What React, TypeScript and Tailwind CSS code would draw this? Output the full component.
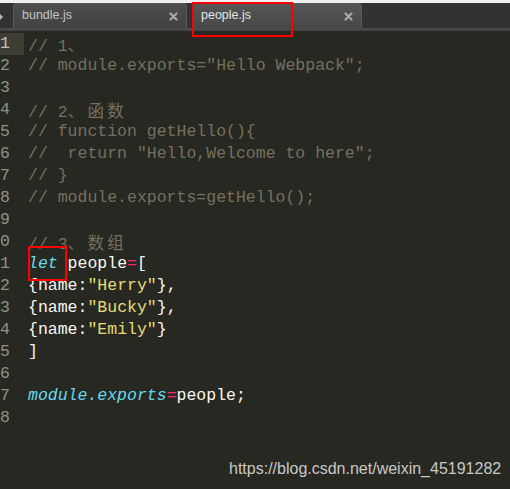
import React from "react";

type Tok = { t: string; c?: string; it?: boolean; cjk?: boolean };

const CMT = "text-[#75715e]";
const STR = "text-[#e6db74]";
const KW = "text-[#66d9ef]";
const OP = "text-[#f92672]";

// code lines, as tokens
const lines: Tok[][] = [
  [{ t: "// 1", c: CMT }, { t: "、", c: CMT, cjk: true }],
  [{ t: '// module.exports="Hello Webpack";', c: CMT }],
  [],
  [{ t: "// 2", c: CMT }, { t: "、函数", c: CMT, cjk: true }],
  [{ t: "// function getHello(){", c: CMT }],
  [{ t: '//  return "Hello,Welcome to here";', c: CMT }],
  [{ t: "// }", c: CMT }],
  [{ t: "// module.exports=getHello();", c: CMT }],
  [],
  [{ t: "// 3", c: CMT }, { t: "、数组", c: CMT, cjk: true }],
  [{ t: "let", c: KW, it: true }, { t: " people" }, { t: "=", c: OP }, { t: "[" }],
  [{ t: "{name:" }, { t: '"Herry"', c: STR }, { t: "}," }],
  [{ t: "{name:" }, { t: '"Bucky"', c: STR }, { t: "}," }],
  [{ t: "{name:" }, { t: '"Emily"', c: STR }, { t: "}" }],
  [{ t: "]" }],
  [],
  [{ t: "module.exports", c: KW, it: true }, { t: "=", c: OP }, { t: "people;" }],
  [],
];

const CloseX = () => (
  <svg width="9" height="9" viewBox="0 0 9 9">
    <path d="M1.5 1.5 L7.5 7.5 M7.5 1.5 L1.5 7.5" stroke="#a8a8a8" strokeWidth="2.2" strokeLinecap="round" />
  </svg>
);

const Tab = ({ name, active }: { name: string; active?: boolean }) => (
  <div
    className={`flex items-center justify-between h-full rounded-t-[4px] pl-[8px] pr-[8px] border-t border-x border-[#5a5a5a] ${
      active ? "w-[170px] bg-gradient-to-b from-[#565656] to-[#474747]" : "w-[174px] bg-gradient-to-b from-[#4e4e4e] to-[#424242]"
    }`}
  >
    <span className={`text-[12.5px] pb-[2px] ${active ? "text-[#dfe8e6]" : "text-[#c4c4c4]"}`}>{name}</span>
    <CloseX />
  </div>
);

export default function App() {
  return (
    <div className="relative w-[510px] h-[489px] overflow-hidden bg-[#272822]" style={{ fontFamily: "'Liberation Sans', Arial, sans-serif" }}>
      <div className="h-[3px] bg-[#f0f0f0]" />
      {/* tab bar */}
      <div className="h-[28px] bg-[#323232] flex flex-col">
        <div className="flex-1 flex items-end">
          <div className="w-[13px] h-full flex items-center">
            <svg width="5" height="8" viewBox="0 0 5 8" className="ml-[-1px] mt-[2px]">
              <path d="M0 0 L4 4 L0 8 Z" fill="#b5b5b5" />
            </svg>
          </div>
          <div className="flex gap-[5px] h-[25px]">
            <Tab name="bundle.js" />
            <Tab name="people.js" active />
          </div>
        </div>
        <div className="h-[3px] bg-[#454545] border-t border-[#4c4c4c]" />
      </div>

      {/* editor */}
      <div className="flex pt-[2px]" style={{ fontFamily: "'Liberation Mono', Consolas, monospace" }}>
        <div className="w-[24px] shrink-0">
          {lines.map((_, i) => (
            <div
              key={i}
              className={`h-[22px] leading-[22px] text-[16.5px] text-right overflow-hidden pr-[14px] ${
                i === 0 ? "bg-[#3e3d32] text-[#c2c2bb]" : "text-[#90908a]"
              }`}
            >
              <span className="whitespace-pre">{(i + 1) % 10}</span>
            </div>
          ))}
        </div>
        <div className="pl-[4px] flex-1">
          {lines.map((toks, i) => (
            <div key={i} className="h-[22px] leading-[22px] text-[16.5px] whitespace-pre text-[#f8f8f2]">
              {toks.map((k, j) =>
                k.cjk ? (
                  <span key={j} className={`${k.c} tracking-[3.3px]`} style={{ fontFamily: "'Noto Sans CJK SC', sans-serif" }}>
                    {k.t}
                  </span>
                ) : (
                  <span key={j} className={`${k.c ?? ""} ${k.it ? "italic" : ""}`}>
                    {k.t}
                  </span>
                )
              )}
            </div>
          ))}
        </div>
      </div>

      {/* red annotation boxes */}
      <div className="absolute left-[192px] top-[2px] w-[101px] h-[35px] border-2 border-[#ff0000]" />
      <div className="absolute left-[28px] top-[246px] w-[39px] h-[35px] border-2 border-[#ff0000]" />

      {/* watermark */}
      <div className="absolute left-[229px] top-[459px] text-[16px] text-[#c8c8c8] leading-[20px]">
        https://blog.csdn.net/weixin_45191282
      </div>
    </div>
  );
}
